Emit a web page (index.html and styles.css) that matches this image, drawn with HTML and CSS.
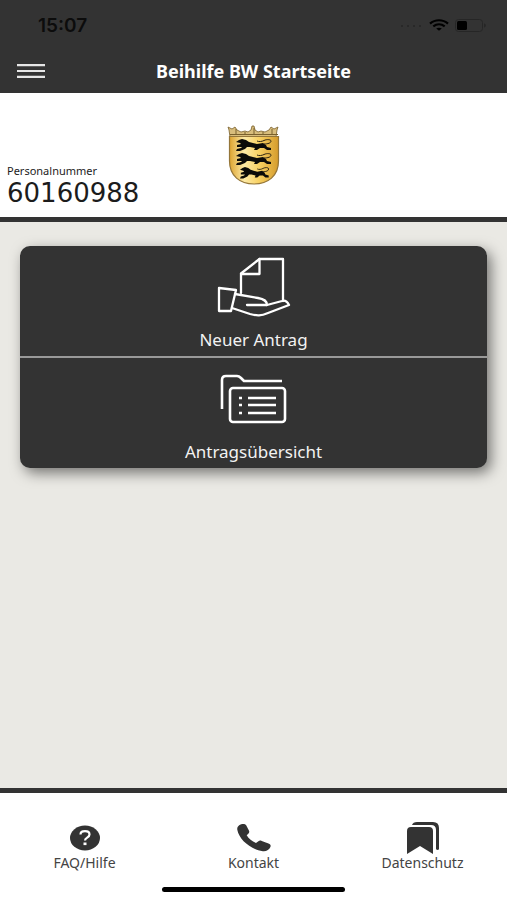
FILE: index.html
```html
<!DOCTYPE html>
<html lang="de">
<head>
  <meta charset="utf-8">
  <meta name="viewport" content="width=device-width, initial-scale=1">
  <title>Beihilfe BW</title>
  <link rel="stylesheet" href="styles.css">
</head>
<body>

  <header>
    <div class="status-bar">
      <span class="time">15:07</span>
      <div class="status-icons">
        <svg width="24" height="4" viewBox="0 0 24 4" fill="#262626">
          <circle cx="3" cy="3" r="1"/><circle cx="9" cy="3" r="1"/><circle cx="15" cy="3" r="1"/><circle cx="21" cy="3" r="1"/>
        </svg>
        <svg width="20" height="12" viewBox="0 0 20 12" fill="none" stroke="#000" stroke-width="2.2">
          <path d="M1 4.6C6 .1 14 .1 19 4.6"/>
          <path d="M4.3 7.4c3.4-2.8 8-2.8 11.4 0"/>
          <path d="M10 11.8 7.2 9.6c1.7-1.3 3.9-1.3 5.6 0z" fill="#000" stroke="none"/>
        </svg>
        <svg width="32" height="13" viewBox="0 0 32 13">
          <rect x=".5" y=".5" width="27" height="12" rx="3" fill="none" stroke="#262626"/>
          <rect x="2" y="2" width="10" height="9" rx="1.5" fill="#000"/>
          <path d="M29 4.5c2.4.6 2.4 3.4 0 4z" fill="#262626"/>
        </svg>
      </div>
    </div>
    <div class="nav-bar">
      <button class="menu-btn" aria-label="Menü">
        <svg width="30" height="16" viewBox="0 0 30 16" fill="none" stroke="#e6e6e6" stroke-width="2.2">
          <path d="M1 2.2h28M1 8h28M1 13.8h28"/>
        </svg>
      </button>
      <h1>Beihilfe BW Startseite</h1>
    </div>
  </header>

  <section class="person">
    <svg class="wappen" width="54" height="60" viewBox="0 0 54 60">
      <defs>
        <linearGradient id="gold" x1="0" y1="0" x2="1" y2="0">
          <stop offset="0" stop-color="#dda32f"/>
          <stop offset=".3" stop-color="#fdeaa6"/>
          <stop offset=".6" stop-color="#f8d163"/>
          <stop offset="1" stop-color="#d59b2b"/>
        </linearGradient>
        <g id="lion">
          <path d="M0 3 3 1 6 0l4 1 3 2 8 2 6-1 3 2 1 2 4 1v2h-4l-3-2-4 0-3 2h-3l1-2-5-1-3 0-2 2-5 2H0l1-2 4-1 1-1-5 0 0-2 4-1-1-1z" fill="#0c0b08"/>
          <path d="M28 5c4 0 7-1 7-3 0-1.500-4-2-7-.5-2 1-5 1.500-7 .5" fill="none" stroke="#2a2212" stroke-width="1"/>
        </g>
      </defs>
      <!-- crown -->
      <path d="M3 12 2 5 1 2l4 2 3-2 2 3 4 2 4-1 3 1 3-2 1-4 2 0 1 4 3 2 3-1 4 1 4-2 2-3 3 2 4-2-1 3-1 7z" fill="#d8bd7c" stroke="#79602c" stroke-width=".8"/>
      <path d="M3 9.500h48M9 4v5M27 3v6M45 4v5M18 7v2M36 7v2" stroke="#79602c" fill="none"/>
      <!-- shield -->
      <path d="M2.500 11.500h49V36C51.500 51 41 59 27 59S2.500 51 2.500 36z" fill="url(#gold)" stroke="#94763a" stroke-width="1.200"/>
      <use href="#lion" x="9" y="14"/>
      <use href="#lion" x="9" y="28"/>
      <use href="#lion" transform="translate(13 42) scale(.82 .95)"/>
    </svg>
    <p class="label">Personalnummer</p>
    <p class="number">60160988</p>
  </section>

  <main>
    <div class="card">
      <a href="#neu" class="tile">
        <svg width="74" height="60" viewBox="0 0 74 60" fill="none" stroke="#fff" stroke-width="2.3" stroke-linejoin="round" stroke-linecap="round">
          <path d="M24 36V16.500L42.500 2H66v42"/>
          <path d="M42.500 2v15H24"/>
          <path d="M2 31l17 2-5 21H2z"/>
          <path d="M18 37l23 4c6 1 9 3 9 7H30"/>
          <path d="M50 48l15-4c3-1 5 0 7 4L51 56c-7 3-11 3-18 1l-18-6"/>
        </svg>
        <span>Neuer Antrag</span>
      </a>
      <a href="#liste" class="tile">
        <svg width="74" height="60" viewBox="0 0 74 60" fill="none" stroke="#fff" stroke-width="2.600" stroke-linejoin="round">
          <path d="M5 40V11q0-4 4-4h11q2 0 4 2l3 3h38"/>
          <rect x="13" y="19" width="55" height="34" rx="3"/>
          <path d="M22 29h3M31 29h28M22 36h3M31 36h28M22 44h3M31 44h28"/>
        </svg>
        <span>Antragsübersicht</span>
      </a>
    </div>
  </main>

  <footer>
    <nav>
      <a href="#faq">
        <svg width="34" height="34" viewBox="0 0 34 34">
          <ellipse cx="17" cy="18" rx="15" ry="12.500" fill="#333"/>
          <path d="M12.500 14.500c0-4.500 9-4.500 9 0 0 3.300-4.500 3-4.500 6" fill="none" stroke="#fff" stroke-width="2.200"/>
          <rect x="15.500" y="22.500" width="3" height="2.600" fill="#fff"/>
        </svg>
        <span>FAQ/Hilfe</span>
      </a>
      <a href="#kontakt">
        <svg width="36" height="34" viewBox="0 0 36 34" fill="#333">
          <path d="M2 6.500c1.500-2 4-2.500 6-2.400 1.500.2 2 .9 2.700 2.200l2.200 4.200c.7 1.400.4 2.200-.6 3.200l-1.600 1.600c2 3.500 5.300 6 9.300 7.700l2.400-1.700c1-.8 2-.9 3.300-.4l6.800 2.500c2 .8 2.600 2 1.900 3.600-1.200 2.700-4.200 4.700-7.600 4.200C14.500 29.500 3 19.500 1.300 9.800c-.2-1.400 0-2.300.7-3.300z"/>
        </svg>
        <span>Kontakt</span>
      </a>
      <a href="#datenschutz">
        <svg width="34" height="34" viewBox="0 0 34 34" fill="#333">
          <path d="M1 34V11q0-4 4-4h18q4 0 4 4v23l-13-8z"/>
          <path d="M6 5Q7 2 11 2h16q6 0 6 6v21q0 1-2 1l-1-1V10q0-5-5-5z"/>
        </svg>
        <span>Datenschutz</span>
      </a>
    </nav>
    <div class="home-bar"></div>
  </footer>

</body>
</html>
```
FILE: styles.css
```css
:root {
  --dark: #333333;
  --bg: #eae9e4;
  --text: #1c1c1c;
}

* {
  box-sizing: border-box;
}

body {
  margin: 0;
  min-height: 100vh;
  display: flex;
  flex-direction: column;
  font-family: "Noto Sans", sans-serif;
  background: var(--bg);
  color: var(--text);
}

header {
  background: var(--dark);
  padding-bottom: 1px;
}

.status-bar {
  height: 50px;
  padding: 0 20px 0 38px;
  display: flex;
  align-items: center;
  justify-content: space-between;
}

.time {
  font-family: Inter, sans-serif;
  font-size: 19px;
  font-weight: 600;
  color: #0c0c0c;
}

.status-icons {
  display: flex;
  align-items: center;
  gap: 6px;
}

.nav-bar {
  height: 42px;
  padding: 0 16px;
  display: grid;
  grid-template-columns: 30px 1fr 30px;
  align-items: center;
}

.menu-btn {
  display: flex;
  padding: 0;
  border: none;
  background: none;
  cursor: pointer;
}

h1 {
  margin: 0;
  font-size: 18px;
  line-height: 22px;
  text-align: center;
  color: #fff;
}

.person {
  padding: 32px 7px 9px;
  background: #fff;
  border-bottom: 5px solid var(--dark);
  display: flex;
  flex-direction: column;
}

.wappen {
  align-self: center;
  margin-bottom: -21px;
}

.person p {
  margin: 0;
}

.label {
  font-size: 11px;
  line-height: 14px;
}

.number {
  font-family: "DejaVu Sans", sans-serif;
  font-size: 26px;
  line-height: 30px;
}

main {
  flex: 1;
  padding: 24px 20px;
}

.card {
  border-radius: 10px;
  overflow: hidden;
  background: var(--dark);
  box-shadow: 4px 5px 14px rgba(0, 0, 0, 0.5);
}

.tile {
  display: flex;
  flex-direction: column;
  align-items: center;
  gap: 11px;
  padding: 11px 0 4px;
  font-size: 17px;
  line-height: 24px;
  color: #f2f2f2;
  text-decoration: none;
}

.tile + .tile {
  border-top: 2px solid #999;
}

footer {
  background: #fff;
  border-top: 5px solid var(--dark);
  padding: 27px 0 8px;
}

nav {
  display: grid;
  grid-template-columns: repeat(3, 1fr);
}

nav a {
  display: flex;
  flex-direction: column;
  align-items: center;
  font-size: 14px;
  line-height: 18px;
  color: #444;
  text-decoration: none;
}

.home-bar {
  width: 36%;
  height: 5px;
  margin: 15px auto 0;
  border-radius: 3px;
  background: #000;
}
```
